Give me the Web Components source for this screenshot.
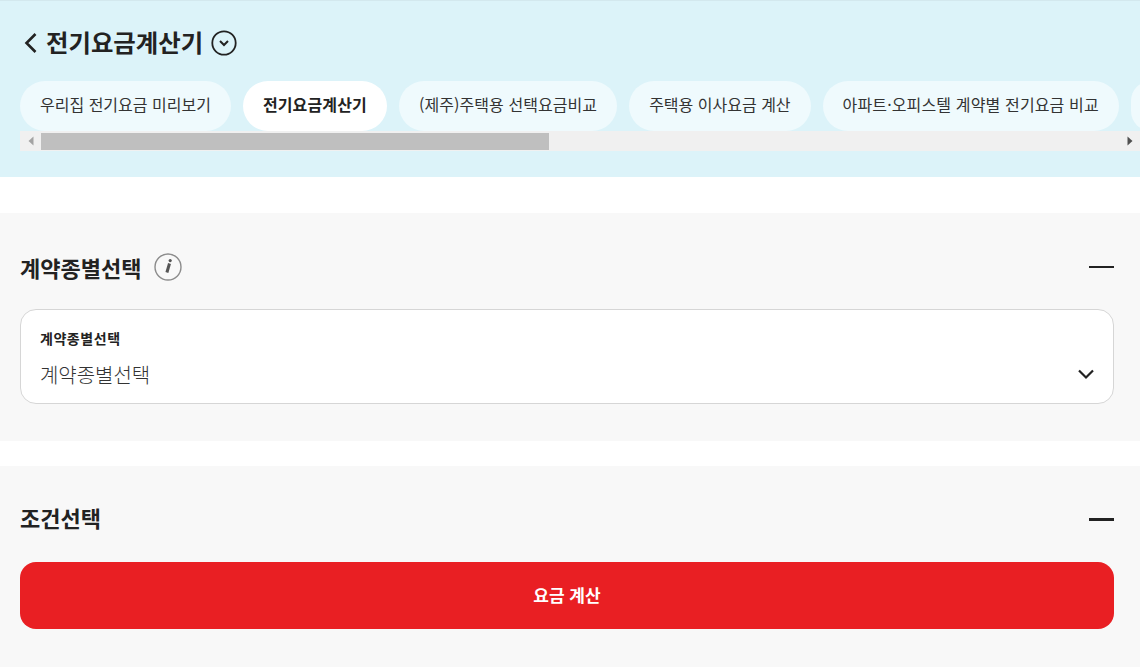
<!DOCTYPE html>
<html lang="ko">
<head>
<meta charset="utf-8">
<title>전기요금계산기</title>
<style>
  html, body { margin: 0; padding: 0; background: #fff; }
  body { font-family: "Noto Sans CJK KR", "Noto Sans", sans-serif; color: #222; width: 1140px; height: 670px; overflow: hidden; }
</style>
</head>
<body>
<calc-header>
  <span slot="title">전기요금계산기</span>
  <tab-pill>우리집 전기요금 미리보기</tab-pill>
  <tab-pill active style="--ls:.14px">전기요금계산기</tab-pill>
  <tab-pill style="--ls:.07px">(제주)주택용 선택요금비교</tab-pill>
  <tab-pill>주택용 이사요금 계산</tab-pill>
  <tab-pill style="--ls:.14px">아파트·오피스텔 계약별 전기요금 비교</tab-pill>
  <tab-pill></tab-pill>
</calc-header>

<calc-section style="margin-top:36px;height:228px;--head-top:12px" info>
  <span slot="title">계약종별선택</span>
  <select-box label="계약종별선택" value="계약종별선택"></select-box>
</calc-section>

<calc-section style="margin-top:25px;height:201px;--head-top:6px" heavy>
  <span slot="title">조건선택</span>
  <red-button>요금 계산</red-button>
</calc-section>

<script>
class CalcHeader extends HTMLElement {
  constructor() {
    super();
    this.attachShadow({ mode: 'open' });
    this.shadowRoot.innerHTML = `
      <style>
        :host { display: block; height: 177px; background: #dcf3f9; box-sizing: border-box; padding-top: 25px; border-top: 1px solid #d3e8ee; }
        .title { display: flex; align-items: center; height: 34px; padding-left: 24px; font-size: 24.4px; font-weight: 700; color: #222; }
        .title ::slotted(span) { margin: 0 0 2px 8px; line-height: 34px; }
        .back { width: 14px; height: 20px; flex: none; }
        .more { width: 26px; height: 26px; margin-left: 8px; flex: none; }
        .wrap { margin: 21px 0 0 20px; }
        .tabs { display: flex; gap: 12px; overflow: hidden; height: 50px; }
        .bar { display: flex; height: 20px; background: #f0f0f0; align-items: stretch; }
        .arrow { width: 21px; flex: none; display: flex; align-items: center; justify-content: center; }
        .thumb { width: 508px; margin: 2px 0 1px; background: #bfbfbf; flex: none; }
        .gap { flex: 1; }
      </style>
      <div class="title">
        <svg class="back" viewBox="0 0 14 20"><path d="M11.5 1 L2.5 10 L11.5 19" fill="none" stroke="#222" stroke-width="2.6"/></svg>
        <slot name="title"></slot>
        <svg class="more" viewBox="0 0 26 26"><circle cx="13" cy="13" r="11.7" fill="none" stroke="#222" stroke-width="1.8"/><path d="M9 11 L13 15 L17 11" fill="none" stroke="#222" stroke-width="2"/></svg>
      </div>
      <div class="wrap">
        <div class="tabs"><slot></slot></div>
        <div class="bar">
          <div class="arrow"><svg width="6" height="10" viewBox="0 0 6 10"><path d="M5.5 0.5 V9.5 L0.5 5 Z" fill="#a3a3a3"/></svg></div>
          <div class="thumb"></div>
          <div class="gap"></div>
          <div class="arrow"><svg width="6" height="10" viewBox="0 0 6 10"><path d="M0.5 0.5 V9.5 L5.5 5 Z" fill="#505050"/></svg></div>
        </div>
      </div>`;
  }
}

class TabPill extends HTMLElement {
  constructor() {
    super();
    this.attachShadow({ mode: 'open' });
    this.shadowRoot.innerHTML = `
      <style>
        :host { display: flex; flex: none; align-items: center; height: 50px; box-sizing: border-box; padding: 0 20px 5px; border-radius: 25px; background: #effafd; font-size: 16px; letter-spacing: var(--ls, 0); color: #333; white-space: nowrap; }
        :host([active]) { background: #fff; font-weight: 700; color: #222; }
      </style>
      <slot></slot>`;
  }
}

class CalcSection extends HTMLElement {
  constructor() {
    super();
    this.attachShadow({ mode: 'open' });
    this.shadowRoot.innerHTML = `
      <style>
        :host { display: block; background: #f8f8f8; box-sizing: border-box; padding: 0 26px 0 20px; }
        .head { display: flex; align-items: center; height: 96px; box-sizing: border-box; padding-top: var(--head-top); font-size: 22px; font-weight: 700; color: #222; }
        .info { display: none; width: 28px; height: 28px; margin-left: 13px; }
        :host([info]) .info { display: block; }
        .line { margin-left: auto; width: 25px; height: 2px; background: #222; }
        :host([heavy]) .line { height: 3px; margin-top: 5px; }
      </style>
      <div class="head">
        <slot name="title"></slot>
        <svg class="info" viewBox="0 0 28 28"><circle cx="14" cy="14" r="13" fill="none" stroke="#8c8c8c" stroke-width="1.4"/><path d="M15.5 10.5 L12.9 19.5" fill="none" stroke="#555" stroke-width="3"/><circle cx="16.2" cy="7.6" r="1.6" fill="#555"/></svg>
        <div class="line"></div>
      </div>
      <slot></slot>`;
  }
}

class SelectBox extends HTMLElement {
  constructor() {
    super();
    this.attachShadow({ mode: 'open' });
    this.shadowRoot.innerHTML = `
      <style>
        :host { display: block; height: 95px; box-sizing: border-box; background: #fff; border: 1px solid #d6d6d6; border-radius: 16px; padding: 18px 19px 0; }
        .label { font-size: 14px; line-height: 20px; font-weight: 700; color: #222; letter-spacing: .55px; }
        .row { display: flex; align-items: center; justify-content: space-between; margin-top: 11px; height: 30px; }
        .value { font-size: 20px; font-weight: 300; color: #333; letter-spacing: -.05px; }
        svg { width: 18px; height: 12px; margin-right: -1px; }
      </style>
      <div class="label"></div>
      <div class="row">
        <span class="value"></span>
        <svg viewBox="0 0 18 12"><path d="M2 2.5 L9 9.5 L16 2.5" fill="none" stroke="#222" stroke-width="2.2"/></svg>
      </div>`;
    this.shadowRoot.querySelector('.label').textContent = this.getAttribute('label');
    this.shadowRoot.querySelector('.value').textContent = this.getAttribute('value');
  }
}

class RedButton extends HTMLElement {
  constructor() {
    super();
    this.attachShadow({ mode: 'open' });
    this.shadowRoot.innerHTML = `
      <style>
        :host { display: flex; align-items: center; justify-content: center; box-sizing: border-box; height: 67px; padding-bottom: 2px; background: #e91f23; border-radius: 16px; color: #fff; font-size: 17px; font-weight: 700; }
      </style>
      <slot></slot>`;
  }
}

customElements.define('calc-header', CalcHeader);
customElements.define('tab-pill', TabPill);
customElements.define('calc-section', CalcSection);
customElements.define('select-box', SelectBox);
customElements.define('red-button', RedButton);
</script>
</body>
</html>
